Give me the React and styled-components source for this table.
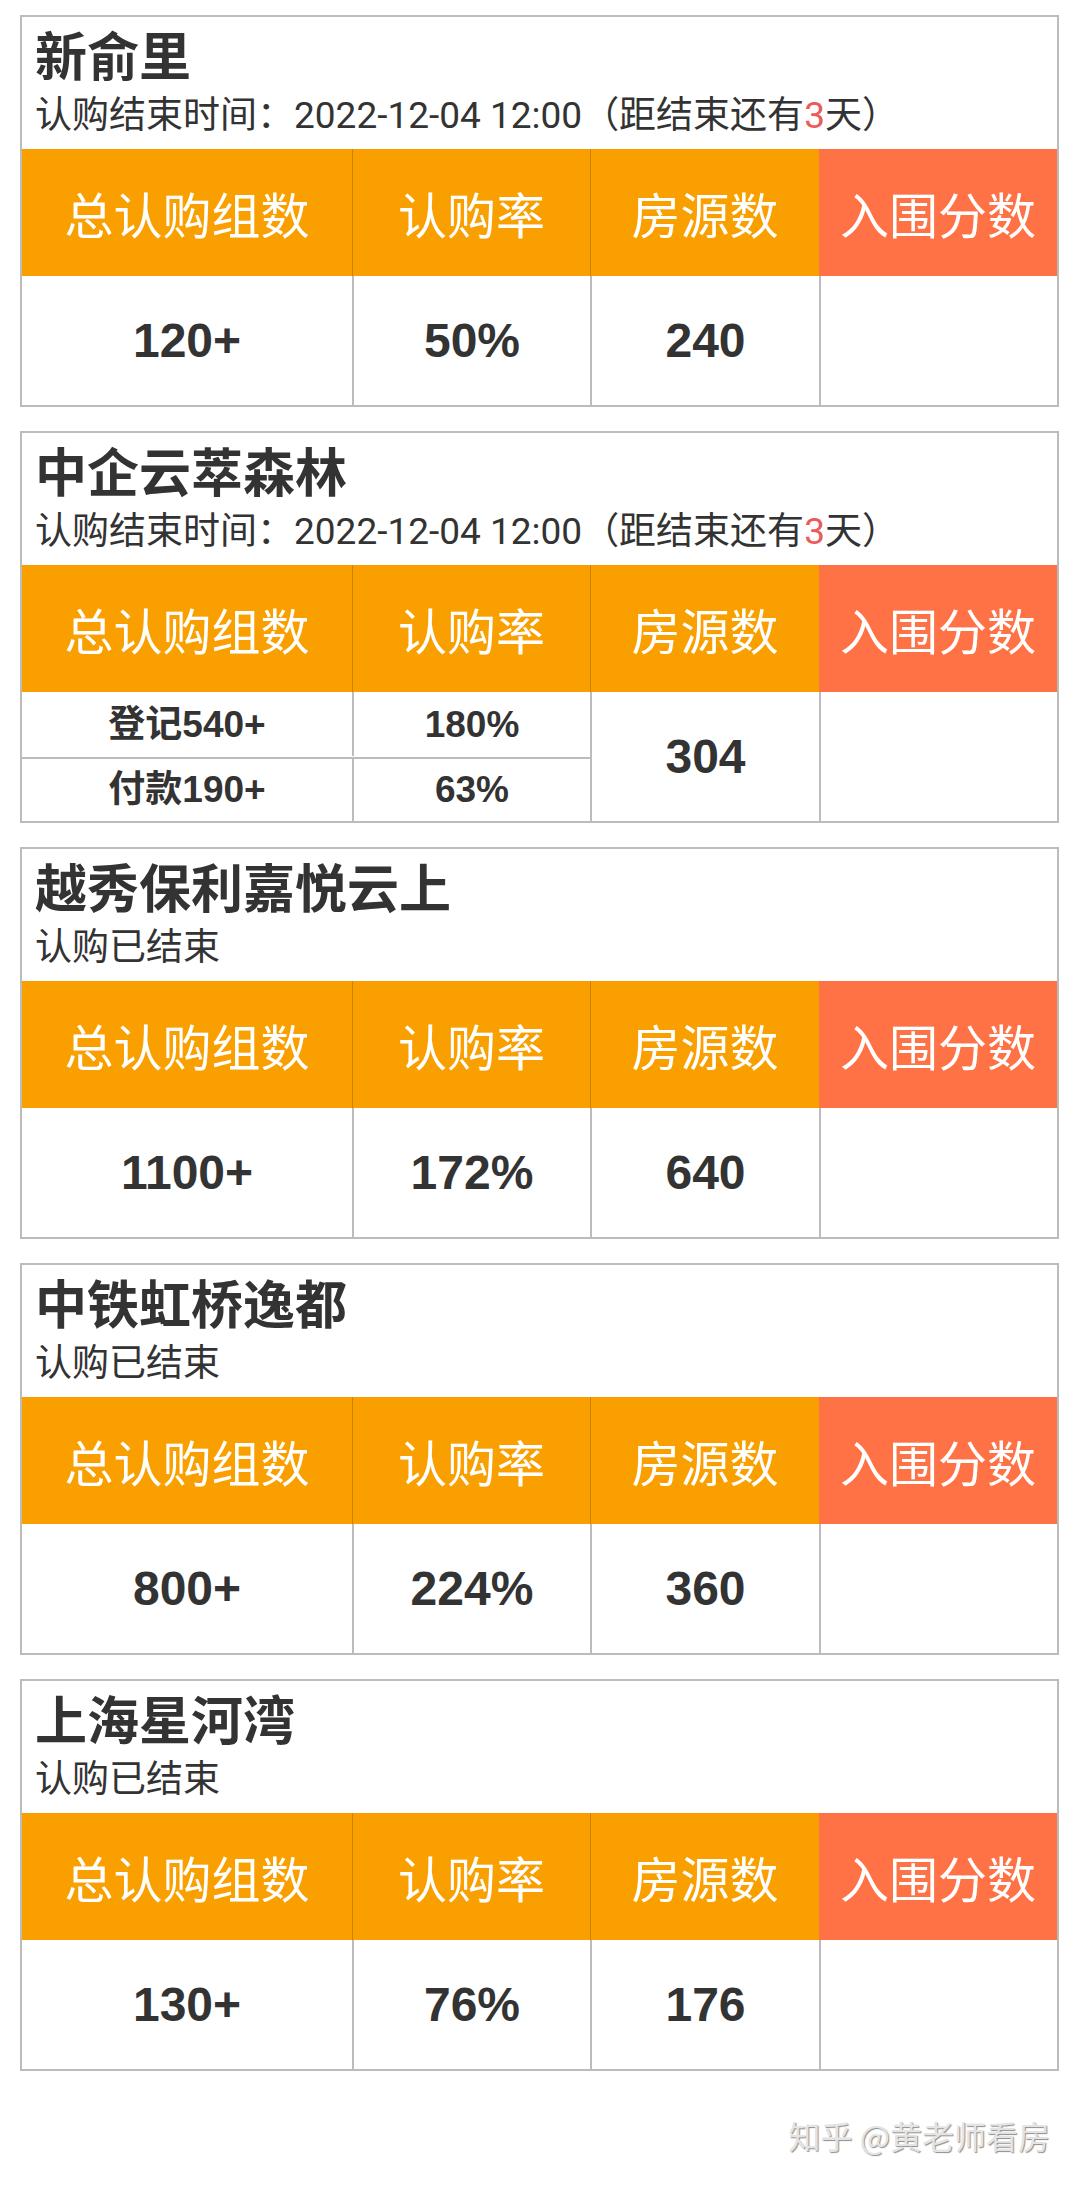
import React from "react";
import styled, { createGlobalStyle } from "styled-components";

const GlobalStyle = createGlobalStyle`
  html, body {
    margin: 0;
    padding: 0;
    background: #fff;
  }
  body {
    font-family: "Noto Sans CJK SC", sans-serif;
  }
`;

const projects = [
  {
    name: "新俞里",
    endTime: "2022-12-04 12:00",
    daysLeft: 3,
    rows: [["120+", "50%"]],
    houses: "240",
  },
  {
    name: "中企云萃森林",
    endTime: "2022-12-04 12:00",
    daysLeft: 3,
    rows: [
      ["登记540+", "180%"],
      ["付款190+", "63%"],
    ],
    houses: "304",
  },
  { name: "越秀保利嘉悦云上", rows: [["1100+", "172%"]], houses: "640" },
  { name: "中铁虹桥逸都", rows: [["800+", "224%"]], houses: "360" },
  { name: "上海星河湾", rows: [["130+", "76%"]], houses: "176" },
];

const App = () => {
  return (
    <Page>
      <GlobalStyle />
      {projects.map((p) => (
        <Card key={p.name}>
          <Head>
            <Title>{p.name}</Title>
            <Sub>
              {p.endTime ? (
                <>
                  认购结束时间：<Num>{p.endTime}</Num>（距结束还有
                  <Red>{p.daysLeft}</Red>天）
                </>
              ) : (
                "认购已结束"
              )}
            </Sub>
          </Head>
          <Table>
            <HeadCell>总认购组数</HeadCell>
            <HeadCell>认购率</HeadCell>
            <HeadCell>房源数</HeadCell>
            <HeadCell $hot>入围分数</HeadCell>
            {p.rows.length === 1 ? (
              <>
                <Cell>{p.rows[0][0]}</Cell>
                <Cell>{p.rows[0][1]}</Cell>
                <Cell>{p.houses}</Cell>
                <Cell />
              </>
            ) : (
              <>
                <SmallCell>{p.rows[0][0]}</SmallCell>
                <SmallCell>{p.rows[0][1]}</SmallCell>
                <Cell $span={2}>{p.houses}</Cell>
                <Cell $span={2} />
                <SmallCell $top>{p.rows[1][0]}</SmallCell>
                <SmallCell $top>{p.rows[1][1]}</SmallCell>
              </>
            )}
          </Table>
        </Card>
      ))}
      <Footer>
        <Mark>知乎 @黄老师看房</Mark>
      </Footer>
    </Page>
  );
};

const Page = styled.div`
  width: 1080px;
  padding: 15px 0 0 20px;
  box-sizing: border-box;
  display: flex;
  flex-direction: column;
  gap: 24px;
`;

const Card = styled.section`
  width: 1039px;
  box-sizing: border-box;
  border: 2px solid #bcbcbc;
  background: #fff;
`;

const Head = styled.div`
  padding: 6px 13px 12px;
  color: #333;
`;

const Title = styled.h2`
  margin: 0 0 10px;
  font: 700 52px/62px "Noto Sans CJK SC", sans-serif;
`;

const Sub = styled.div`
  font: 400 37px/42px Roboto, "Noto Sans CJK SC", sans-serif;
  color: #333;
  white-space: nowrap;
`;

const Num = styled.span`
  font-family: Roboto, sans-serif;
`;

const Red = styled.span`
  color: #ec5a5a;
  font-family: Roboto, sans-serif;
`;

const Table = styled.div`
  display: grid;
  grid-template-columns: 330px 238px 229px 1fr;
`;

const HeadCell = styled.div`
  height: 127px;
  display: flex;
  align-items: center;
  justify-content: center;
  background: ${({ $hot }) => ($hot ? "#ff7246" : "#f9a000")};
  color: #fff;
  font: 400 49px/1 "Noto Sans CJK SC", sans-serif;
  border-left: ${({ $hot }) => ($hot ? "none" : "1px solid #c98400")};
  &:first-child {
    border-left: none;
  }
`;

const Cell = styled.div`
  min-height: 129px;
  display: flex;
  align-items: center;
  justify-content: center;
  grid-row: ${({ $span }) => ($span ? `span ${$span}` : "auto")};
  border-left: 2px solid #bcbcbc;
  &:nth-child(5) {
    border-left: none;
  }
  color: #333;
  font: 700 48px/1 "Liberation Sans", "Noto Sans CJK SC", sans-serif;
`;

const SmallCell = styled.div`
  height: 64px;
  box-sizing: border-box;
  display: flex;
  align-items: center;
  justify-content: center;
  border-left: 2px solid #bcbcbc;
  border-top: ${({ $top }) => ($top ? "2px solid #bcbcbc" : "none")};
  &:nth-child(5),
  &:nth-child(9) {
    border-left: none;
  }
  color: #333;
  font: 700 37px/1 "Liberation Sans", "Noto Sans CJK SC", sans-serif;
`;

const Footer = styled.div`
  display: flex;
  justify-content: flex-end;
  padding: 24px 30px 20px 0;
`;

const Mark = styled.span`
  font: 400 32px/1 "Noto Sans CJK SC", sans-serif;
  color: #e4e4e4;
  text-shadow: 1px 1px 1px rgba(0, 0, 0, 0.45);
`;

export default App;
